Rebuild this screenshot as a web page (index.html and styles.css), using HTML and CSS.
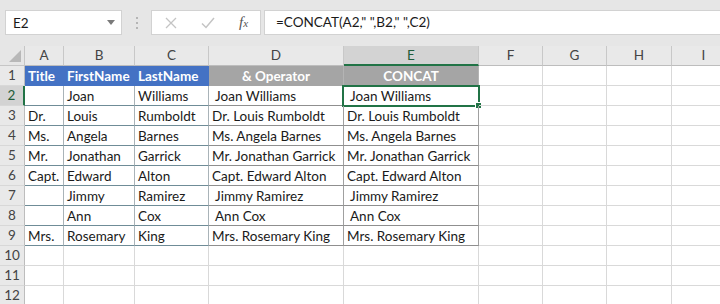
FILE: index.html
```html
<!DOCTYPE html>
<html lang="en">
<head>
    <meta charset="UTF-8">
    <title>CONCAT</title>
    <link rel="stylesheet" href="styles.css">
</head>
<body>
    <div class="formula-bar">
        <div class="name-box">
            <span>E2</span>
            <svg class="drop" width="8" height="5" viewBox="0 0 8 5"><path d="M0 0h8L4 5z" fill="#7a7a7a"/></svg>
        </div>
        <svg class="grip" width="4" height="14" viewBox="0 0 4 14">
            <rect x="1" y="1" width="2" height="2" fill="#b5b5b5"/>
            <rect x="1" y="6" width="2" height="2" fill="#b5b5b5"/>
            <rect x="1" y="11" width="2" height="2" fill="#b5b5b5"/>
        </svg>
        <div class="fx-box">
            <svg width="12" height="12" viewBox="0 0 12 12"><path d="M1 1l10 10M11 1L1 11" stroke="#c4c4c4" stroke-width="1.3" fill="none"/></svg>
            <svg width="14" height="12" viewBox="0 0 14 12"><path d="M1 6.5l4 4L13 1" stroke="#c4c4c4" stroke-width="1.5" fill="none"/></svg>
            <span class="fx">f<small>x</small></span>
        </div>
        <div class="formula-input">=CONCAT(A2," ",B2," ",C2)</div>
    </div>

    <div class="sheet">
        <div class="corner"></div>
        <div class="col-head">A</div>
        <div class="col-head">B</div>
        <div class="col-head">C</div>
        <div class="col-head">D</div>
        <div class="col-head active">E</div>
        <div class="col-head">F</div>
        <div class="col-head">G</div>
        <div class="col-head">H</div>
        <div class="col-head">I</div>

        <div class="row-head">1</div>
        <div class="cell hd blue">Title</div>
        <div class="cell hd blue">FirstName</div>
        <div class="cell hd blue">LastName</div>
        <div class="cell hd gray">&amp; Operator</div>
        <div class="cell hd gray">CONCAT</div>
        <div class="cell"></div><div class="cell"></div><div class="cell"></div><div class="cell"></div>

        <div class="row-head active">2</div>
        <div class="cell tb"></div>
        <div class="cell tb">Joan</div>
        <div class="cell tb">Williams</div>
        <div class="cell tb">&nbsp;Joan Williams</div>
        <div class="cell tb selected">&nbsp;Joan Williams</div>
        <div class="cell"></div><div class="cell"></div><div class="cell"></div><div class="cell"></div>

        <div class="row-head">3</div>
        <div class="cell tb">Dr.</div>
        <div class="cell tb">Louis</div>
        <div class="cell tb">Rumboldt</div>
        <div class="cell tb">Dr. Louis Rumboldt</div>
        <div class="cell tb">Dr. Louis Rumboldt</div>
        <div class="cell"></div><div class="cell"></div><div class="cell"></div><div class="cell"></div>

        <div class="row-head">4</div>
        <div class="cell tb">Ms.</div>
        <div class="cell tb">Angela</div>
        <div class="cell tb">Barnes</div>
        <div class="cell tb">Ms. Angela Barnes</div>
        <div class="cell tb">Ms. Angela Barnes</div>
        <div class="cell"></div><div class="cell"></div><div class="cell"></div><div class="cell"></div>

        <div class="row-head">5</div>
        <div class="cell tb">Mr.</div>
        <div class="cell tb">Jonathan</div>
        <div class="cell tb">Garrick</div>
        <div class="cell tb">Mr. Jonathan Garrick</div>
        <div class="cell tb">Mr. Jonathan Garrick</div>
        <div class="cell"></div><div class="cell"></div><div class="cell"></div><div class="cell"></div>

        <div class="row-head">6</div>
        <div class="cell tb">Capt.</div>
        <div class="cell tb">Edward</div>
        <div class="cell tb">Alton</div>
        <div class="cell tb">Capt. Edward Alton</div>
        <div class="cell tb">Capt. Edward Alton</div>
        <div class="cell"></div><div class="cell"></div><div class="cell"></div><div class="cell"></div>

        <div class="row-head">7</div>
        <div class="cell tb"></div>
        <div class="cell tb">Jimmy</div>
        <div class="cell tb">Ramirez</div>
        <div class="cell tb">&nbsp;Jimmy Ramirez</div>
        <div class="cell tb">&nbsp;Jimmy Ramirez</div>
        <div class="cell"></div><div class="cell"></div><div class="cell"></div><div class="cell"></div>

        <div class="row-head">8</div>
        <div class="cell tb"></div>
        <div class="cell tb">Ann</div>
        <div class="cell tb">Cox</div>
        <div class="cell tb">&nbsp;Ann Cox</div>
        <div class="cell tb">&nbsp;Ann Cox</div>
        <div class="cell"></div><div class="cell"></div><div class="cell"></div><div class="cell"></div>

        <div class="row-head">9</div>
        <div class="cell tb">Mrs.</div>
        <div class="cell tb">Rosemary</div>
        <div class="cell tb">King</div>
        <div class="cell tb">Mrs. Rosemary King</div>
        <div class="cell tb">Mrs. Rosemary King</div>
        <div class="cell"></div><div class="cell"></div><div class="cell"></div><div class="cell"></div>

        <div class="row-head">10</div>
        <div class="cell"></div><div class="cell"></div><div class="cell"></div><div class="cell"></div><div class="cell"></div>
        <div class="cell"></div><div class="cell"></div><div class="cell"></div><div class="cell"></div>

        <div class="row-head">11</div>
        <div class="cell"></div><div class="cell"></div><div class="cell"></div><div class="cell"></div><div class="cell"></div>
        <div class="cell"></div><div class="cell"></div><div class="cell"></div><div class="cell"></div>

        <div class="row-head">12</div>
        <div class="cell"></div><div class="cell"></div><div class="cell"></div><div class="cell"></div><div class="cell"></div>
        <div class="cell"></div><div class="cell"></div><div class="cell"></div><div class="cell"></div>
    </div>
</body>
</html>
```

FILE: styles.css
```css
body {
    margin: 0;
    width: 720px;
    height: 304px;
    overflow: hidden;
    background: #ffffff;
    font-family: Lato, "Liberation Sans", sans-serif;
    font-size: 13.5px;
    color: #1a1a1a;
}

/* formula bar */
.formula-bar {
    display: flex;
    align-items: center;
    height: 46px;
    padding: 0 0 1px 5px;
    box-sizing: border-box;
    background: #e6e6e6;
}
.name-box {
    display: flex;
    align-items: center;
    justify-content: space-between;
    width: 117px;
    height: 25px;
    padding: 0 6px 0 7px;
    box-sizing: border-box;
    background: #fff;
    border: 1px solid #d2d2d2;
}
.grip {
    margin: 0 12px 0 13px;
}
.fx-box {
    display: flex;
    align-items: center;
    gap: 0;
    width: 110px;
    height: 25px;
    padding: 0 0 0 13px;
    box-sizing: border-box;
    background: #fff;
    border: 1px solid #d2d2d2;
}
.fx-box svg:nth-child(2) {
    margin-left: 24px;
}
.fx {
    margin-left: 24px;
    font-family: "Liberation Serif", serif;
    font-style: italic;
    font-size: 15px;
    color: #555;
}
.fx small {
    font-size: 11px;
}
.formula-input {
    flex: 1;
    height: 25px;
    margin-left: 3px;
    padding-left: 11px;
    box-sizing: border-box;
    line-height: 23px;
    background: #fff;
    border: 1px solid #d2d2d2;
    border-right: none;
    white-space: pre;
}

/* sheet grid */
.sheet {
    display: grid;
    grid-template-columns: 25px 39px 71px 74px 135px 135px 64px 64px 65px 64px;
    grid-auto-rows: 20px;
}
.corner {
    position: relative;
    background: #e6e6e6;
    border-right: 1px solid #c6c6c6;
    border-bottom: 1px solid #c6c6c6;
}
.corner::after {
    content: "";
    position: absolute;
    right: 3px;
    bottom: 3px;
    border-left: 12px solid transparent;
    border-bottom: 12px solid #b8b8b8;
}
.col-head, .row-head {
    background: #e9e9e9;
    color: #444;
    text-align: center;
    line-height: 19px;
    box-sizing: border-box;
}
.col-head {
    border-right: 1px solid #c8c8c8;
    border-bottom: 1px solid #bdbdbd;
}
.col-head.active {
    background: #d3d3d3;
    color: #1f5c3a;
    border-bottom: 2px solid #217346;
}
.row-head {
    border-right: 1px solid #bdbdbd;
    border-bottom: 1px solid #d8d8d8;
}
.row-head.active {
    background: #d3d3d3;
    color: #1f5c3a;
    border-right: 2px solid #217346;
}

.cell {
    position: relative;
    padding: 0 3px;
    box-sizing: border-box;
    line-height: 20px;
    white-space: nowrap;
    overflow: visible;
    border-right: 1px solid #d9d9d9;
    border-bottom: 1px solid #d9d9d9;
}
.cell.hd {
    font-weight: bold;
    color: #fff;
}
.cell.blue {
    background: #4472c4;
    border-right-color: #4472c4;
    border-bottom-color: #4472c4;
}
.cell.gray {
    background: #a5a5a5;
    border-right-color: #b4b4b4;
    border-bottom-color: #a5a5a5;
    text-align: center;
}
.cell.tb {
    border-right-color: #a9b3b8;
    border-bottom-color: #6f8c97;
}
.cell.tb:nth-child(10n+5), .cell.tb:nth-child(10n+6) {
    border-bottom-color: #8f8f8f;
    border-right-color: #a0a0a0;
}

.cell.selected::before {
    content: "";
    position: absolute;
    left: -2px;
    top: -1px;
    right: -2px;
    bottom: -2px;
    border: 2px solid #217346;
}
.cell.selected::after {
    content: "";
    position: absolute;
    right: -4px;
    bottom: -4px;
    width: 5px;
    height: 5px;
    background: #217346;
    border: 1px solid #fff;
}
```
